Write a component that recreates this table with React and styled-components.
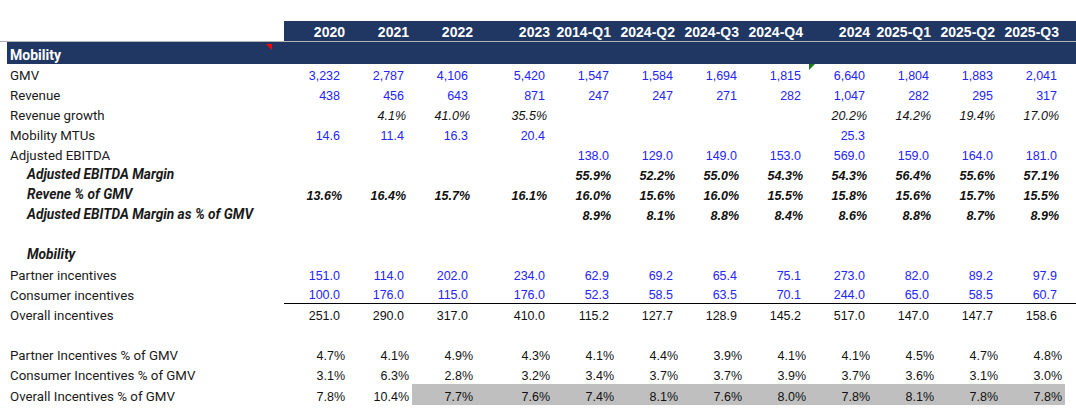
import React from 'react';
import styled, { createGlobalStyle, css } from 'styled-components';

const GlobalStyle = createGlobalStyle`
  html, body { margin: 0; padding: 0; background: #ffffff; }
  body { width: 1076px; height: 413px; overflow: hidden; }
`;

const NAVY = '#203764';
const COLS = '272px 12px 64px 64px 64px 77px repeat(8, 64px) 1fr';
const NUM_FONT = '"Liberation Sans", Arial, sans-serif';
const LABEL_FONT = 'Roboto, "Liberation Sans", Arial, sans-serif';

const PERIODS = ['2020', '2021', '2022', '2023', '2014-Q1', '2024-Q2', '2024-Q3', '2024-Q4', '2024', '2025-Q1', '2025-Q2', '2025-Q3'];

const E = '';
const ROWS = [
  { label: 'GMV', tone: 'blue', flagAt: 8, values: ['3,232', '2,787', '4,106', '5,420', '1,547', '1,584', '1,694', '1,815', '6,640', '1,804', '1,883', '2,041'] },
  { label: 'Revenue', tone: 'blue', values: ['438', '456', '643', '871', '247', '247', '271', '282', '1,047', '282', '295', '317'] },
  { label: 'Revenue growth', tone: 'italic', values: [E, '4.1%', '41.0%', '35.5%', E, E, E, E, '20.2%', '14.2%', '19.4%', '17.0%'] },
  { label: 'Mobility MTUs', tone: 'blue', values: ['14.6', '11.4', '16.3', '20.4', E, E, E, E, '25.3', E, E, E] },
  { label: 'Adjusted EBITDA', tone: 'blue', values: [E, E, E, E, '138.0', '129.0', '149.0', '153.0', '569.0', '159.0', '164.0', '181.0'] },
  { label: 'Adjusted EBITDA Margin', strong: true, tone: 'strong', values: [E, E, E, E, '55.9%', '52.2%', '55.0%', '54.3%', '54.3%', '56.4%', '55.6%', '57.1%'] },
  { label: 'Revene % of GMV', strong: true, tone: 'strong', values: ['13.6%', '16.4%', '15.7%', '16.1%', '16.0%', '15.6%', '16.0%', '15.5%', '15.8%', '15.6%', '15.7%', '15.5%'] },
  { label: 'Adjusted EBITDA Margin as % of GMV', strong: true, tone: 'strong', values: [E, E, E, E, '8.9%', '8.1%', '8.8%', '8.4%', '8.6%', '8.8%', '8.7%', '8.9%'] },
  { blank: true },
  { label: 'Mobility', strong: true, tone: 'strong', values: [] },
  { label: 'Partner incentives', tone: 'blue', values: ['151.0', '114.0', '202.0', '234.0', '62.9', '69.2', '65.4', '75.1', '273.0', '82.0', '89.2', '97.9'] },
  { label: 'Consumer incentives', tone: 'blue', rule: true, values: ['100.0', '176.0', '115.0', '176.0', '52.3', '58.5', '63.5', '70.1', '244.0', '65.0', '58.5', '60.7'] },
  { label: 'Overall incentives', tone: 'black', values: ['251.0', '290.0', '317.0', '410.0', '115.2', '127.7', '128.9', '145.2', '517.0', '147.0', '147.7', '158.6'] },
  { blank: true },
  { label: 'Partner Incentives % of GMV', tone: 'pct', values: ['4.7%', '4.1%', '4.9%', '4.3%', '4.1%', '4.4%', '3.9%', '4.1%', '4.1%', '4.5%', '4.7%', '4.8%'] },
  { label: 'Consumer Incentives % of GMV', tone: 'pct', values: ['3.1%', '6.3%', '2.8%', '3.2%', '3.4%', '3.7%', '3.7%', '3.9%', '3.7%', '3.6%', '3.1%', '3.0%'] },
  { label: 'Overall Incentives % of GMV', tone: 'pct', shadeFrom: 2, height: 21, values: ['7.8%', '10.4%', '7.7%', '7.6%', '7.4%', '8.1%', '7.6%', '8.0%', '7.8%', '8.1%', '7.8%', '7.8%'] },
];

const Sheet = styled.div`
  width: 1076px;
  display: flex;
  flex-direction: column;
  padding-top: 21px;
  font-family: ${LABEL_FONT};
`;

const Row = styled.div`
  display: grid;
  grid-template-columns: ${COLS};
  height: ${(p) => p.$height || 20}px;
  box-sizing: border-box;
`;

const HeaderCell = styled.div`
  background: ${NAVY};
  color: #ffffff;
  font-family: ${NUM_FONT};
  font-weight: bold;
  font-size: 14px;
  line-height: 1;
  display: flex;
  align-items: flex-end;
  justify-content: flex-end;
  padding: 0 ${(p) => (p.$quarter ? 6 : 3)}px 2px 0;
  white-space: nowrap;
`;

const NavyFill = styled.div`
  background: ${NAVY};
`;

const Divider = styled.div`
  height: 1px;
  background: #b3b3b3;
`;

const SectionRow = styled.div`
  display: grid;
  grid-template-columns: 265px 1fr;
  height: 22px;
  margin-left: 7px;
  background: ${NAVY};
`;

const SectionTitle = styled.div`
  position: relative;
  display: flex;
  align-items: flex-end;
  padding: 0 0 2px 3px;
  color: #ffffff;
  font-weight: 700;
  font-size: 14px;
  line-height: 1;

  &::after {
    content: '';
    position: absolute;
    top: 2px;
    right: 0;
    width: 0;
    height: 0;
    border-top: 6px solid #ff0000;
    border-left: 6px solid transparent;
  }
`;

const Label = styled.div`
  display: flex;
  align-items: flex-end;
  padding: 0 0 2px ${(p) => (p.$strong ? 27 : 10)}px;
  line-height: 1;
  white-space: nowrap;
  color: #1a1a1a;
  font-size: ${(p) => (p.$strong ? '13.7px' : '13.3px')};
  font-weight: ${(p) => (p.$strong ? 700 : 400)};
  font-style: ${(p) => (p.$strong ? 'italic' : 'normal')};
`;

const toneStyles = {
  blue: css`color: #2424ff; padding-right: 8px;`,
  black: css`color: #111111; padding-right: 8px;`,
  pct: css`color: #111111; padding-right: 3px;`,
  italic: css`color: #111111; font-style: italic; padding-right: 6px;`,
  strong: css`color: #111111; font-style: italic; font-weight: 700; padding-right: 6px;`,
};

const Value = styled.div`
  position: relative;
  display: flex;
  align-items: flex-end;
  justify-content: flex-end;
  box-sizing: border-box;
  padding-bottom: 2px;
  font-family: ${NUM_FONT};
  font-size: 12.5px;
  line-height: 1;
  white-space: nowrap;
  ${(p) => toneStyles[p.$tone]}
  background: ${(p) => (p.$shade ? '#bfbfbf' : 'transparent')};
  border-bottom: ${(p) => (p.$rule ? '1px solid #000000' : '0')};
  ${(p) =>
    p.$flag &&
    css`
      &::before {
        content: '';
        position: absolute;
        top: 0;
        left: 0;
        width: 0;
        height: 0;
        border-top: 6px solid #1d7a1d;
        border-right: 6px solid transparent;
      }
    `}
`;

const Filler = styled.div`
  box-sizing: border-box;
  border-bottom: ${(p) => (p.$rule ? '1px solid #000000' : '0')};
`;

function DataRow({ row }) {
  if (row.blank) return <Row />;
  return (
    <Row $height={row.height}>
      <Label $strong={row.strong}>{row.label}</Label>
      <div />
      {PERIODS.map((p, i) => (
        <Value
          key={p}
          $tone={row.tone}
          $rule={row.rule}
          $flag={row.flagAt === i}
          $shade={row.shadeFrom !== undefined && i >= row.shadeFrom}
        >
          {row.values[i] || ''}
        </Value>
      ))}
      <Filler $rule={row.rule} />
    </Row>
  );
}

export default function App() {
  return (
    <>
      <GlobalStyle />
      <Sheet>
        <Row>
          <div />
          <div />
          {PERIODS.map((p) => (
            <HeaderCell key={p} $quarter={p.includes('-')}>
              {p}
            </HeaderCell>
          ))}
          <NavyFill />
        </Row>
        <Divider />
        <SectionRow>
          <SectionTitle>Mobility</SectionTitle>
          <div />
        </SectionRow>
        {ROWS.map((row, i) => (
          <DataRow key={i} row={row} />
        ))}
      </Sheet>
    </>
  );
}
